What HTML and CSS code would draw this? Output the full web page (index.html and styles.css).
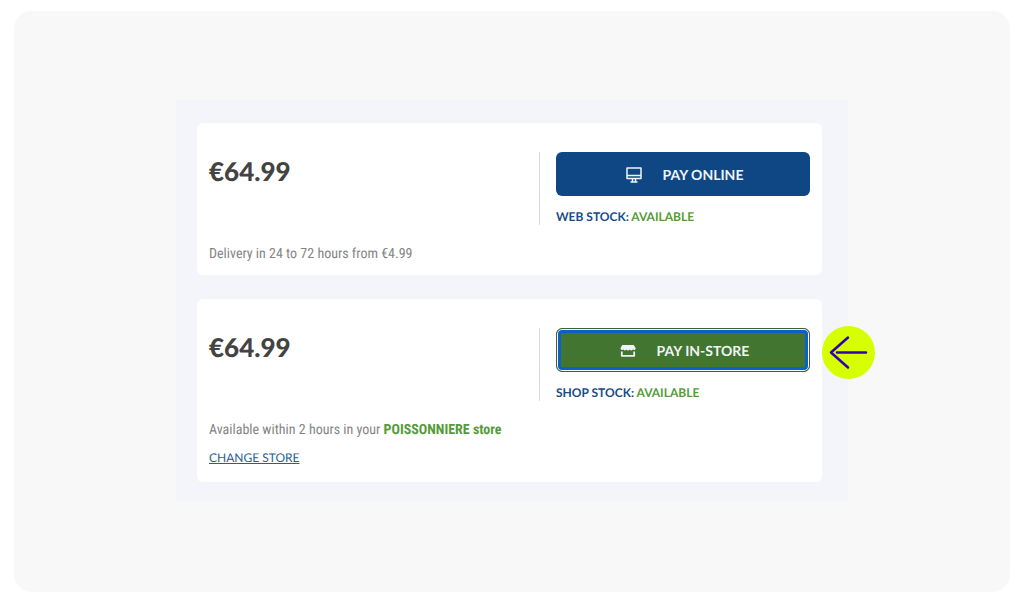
FILE: index.html
```html
<!DOCTYPE html>
<html lang="en">
<head>
<meta charset="utf-8">
<meta name="viewport" content="width=device-width, initial-scale=1">
<title>Payment options</title>
<link rel="stylesheet" href="styles.css">
</head>
<body>
<main class="stage">
  <div class="offers">
    <section class="card">
      <div class="card-top">
        <p class="price">€64.99</p>
        <div class="action">
          <button class="pay pay-online" type="button">
            <svg class="icon" viewBox="0 0 16 16" aria-hidden="true">
              <path d="M1 1h14v10.500H1zM1 8.500h14" fill="none" stroke="currentColor" stroke-width="1.500" stroke-linejoin="round"/>
              <path d="M6.500 11.500v3M9.500 11.500v3M4.500 15h7" fill="none" stroke="currentColor" stroke-width="1.500"/>
            </svg>
            <span>PAY ONLINE</span>
          </button>
          <p class="stock">WEB STOCK: <span class="available">AVAILABLE</span></p>
        </div>
      </div>
      <p class="note">Delivery in 24 to 72 hours from €4.99</p>
    </section>
    <section class="card">
      <div class="card-top">
        <p class="price">€64.99</p>
        <div class="action">
          <button class="pay pay-store" type="button">
            <svg class="icon" viewBox="0 0 16 16" aria-hidden="true">
              <path d="M2.200 2h11.600l2 3.600a1.900 1.900 0 0 1-3 1 1.900 1.900 0 0 1-3 0 2 2 0 0 1-3.400 0 1.900 1.900 0 0 1-3 0 1.900 1.900 0 0 1-3-1z" fill="currentColor"/>
              <path d="M1.800 8.500v4.300h12.400V8.500" fill="none" stroke="currentColor" stroke-width="1.800" stroke-linejoin="round"/>
            </svg>
            <span>PAY IN-STORE</span>
          </button>
          <p class="stock">SHOP STOCK: <span class="available">AVAILABLE</span></p>
        </div>
      </div>
      <p class="note">Available within 2 hours in your <strong class="available">POISSONNIERE store</strong></p>
      <a class="change" href="#">CHANGE STORE</a>
      <svg class="pointer" viewBox="0 0 54 54" aria-hidden="true">
        <circle cx="26.500" cy="26.500" r="26.500" fill="#d6ff00"/>
        <path d="M26 11.500 9 26.500l17 15M15 26.500h29" fill="none" stroke="#3200b4" stroke-width="2.500" stroke-linecap="round" stroke-linejoin="round"/>
      </svg>
    </section>
  </div>
</main>
</body>
</html>
```
FILE: styles.css
```css
* {
  box-sizing: border-box;
}

body {
  margin: 0;
  padding: 11px 14px;
  background: #fff;
  font-family: Lato, sans-serif;
  text-rendering: geometricPrecision;
}

p {
  margin: 0;
}

.stage {
  min-height: calc(100vh - 22px);
  padding: 89px 24px;
  border-radius: 18px;
  background: #f8f8f8;
}

.offers {
  display: flex;
  flex-direction: column;
  gap: 24px;
  max-width: 672px;
  margin: 0 auto;
  padding: 23px 26px 19px 21px;
  background: #f4f5fa;
}

.card {
  position: relative;
  padding: 29px 12px 11px;
  border-radius: 6px;
  background: #fff;
}

.card-top {
  display: grid;
  grid-template-columns: 1fr 271px;
  margin-bottom: 19px;
}

.price {
  color: #434343;
  font-size: 26px;
  line-height: 38px;
  font-weight: 900;
}

.action {
  padding-left: 16px;
  border-left: 1px solid #d8d8d8;
}

.pay {
  display: flex;
  align-items: center;
  justify-content: center;
  gap: 21px;
  width: 100%;
  height: 44px;
  padding: 1px 0 0 3px;
  border: 0;
  border-radius: 6px;
  color: #f0f3f6;
  font-family: inherit;
  font-size: 14px;
  font-weight: 700;
  text-rendering: inherit;
}

.pay-online {
  background: #0e4783;
}

.pay-store {
  border: 1px solid #41622f;
  background: #42752f;
  box-shadow: inset 0 0 0 1px #fff, inset 0 0 0 4px #0b60c9;
}

.icon {
  width: 16px;
  height: 16px;
}

.stock {
  padding: 13px 0 0;
  color: #174b88;
  font-size: 12px;
  line-height: 16px;
  font-weight: 700;
}

.available {
  color: #559b3b;
}

.note {
  color: #858585;
  font-family: "Roboto Condensed", Roboto, sans-serif;
  font-size: 14px;
  line-height: 20px;
}

.change {
  display: block;
  width: fit-content;
  margin: 8px 0 3px;
  color: #285d99;
  font-size: 12px;
  line-height: 20px;
}

.pointer {
  position: absolute;
  top: 27px;
  left: 100%;
  width: 54px;
  height: 54px;
}
```
